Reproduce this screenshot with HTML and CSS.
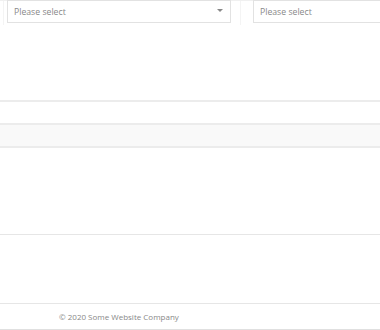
FILE: index.html
```html
<!DOCTYPE html>
<html>
<head>
	<meta charset="utf-8">
	<meta name="viewport" content="width=device-width,initial-scale=1.0">
	<title>Filters</title>
	<link rel="stylesheet" href="styles.css">
</head>
<body>

	<!-- FILTER ROW -->
	<section class="filters">
		<section class="filter-cell first">
			<section class="select">
				<span class="placeholder">Please select</span>
				<figure class="caret"></figure>
			</section>
		</section>
		<section class="filter-cell second">
			<section class="select">
				<span class="placeholder">Please select</span>
			</section>
		</section>
	</section>

	<!-- TABLE AREA -->
	<section class="table">
		<section class="table-head"></section>
		<section class="table-band"></section>
		<section class="table-body"></section>
	</section>

	<section class="spacer"></section>

	<!-- FOOTER -->
	<footer class="footer">
		<span>&copy; 2020 Some Website Company</span>
	</footer>

</body>
</html>
```

FILE: styles.css
```css
body {
	padding:0;
	margin:0;
	font-family:"Open Sans", "Liberation Sans", sans-serif;
	background:#fff;
	color:#777;
	width:380px;
	height:330px;
	overflow:hidden;
}

div, figure, section, footer {
	padding:0; margin:0; box-sizing: border-box;
}

.filters {
	display:flex;
	height:24px;
	border-top:1px solid #f0f0f0;
}

.filter-cell {
	height:24px;
	border-left:1px solid #f4f4f4;
}

.filter-cell.first {
	margin-left:3px;
	padding-left:3px;
	width:238px;
	padding-right:9px;
	border-right:1px solid #f4f4f4;
}

.filter-cell.second {
	margin-left:12px;
	flex:1;
	border-left:none;
}

.select {
	height:23px;
	margin-top:-1px;
	border:1px solid #e2e2e2;
	display:flex;
	align-items:center;
	padding:0 7px 0 6px;
	font-size:8.7px;
	color:#888;
}

.second .select {
	border-right:none;
}

.placeholder {
	flex:1;
}

.caret {
	width:0;
	height:0;
	border-left:3px solid transparent;
	border-right:3px solid transparent;
	border-top:3px solid #888;
	margin-top:-2px;
}

.table {
	margin-top:76px;
}

.table-head {
	height:23px;
	border-top:2px solid #ececec;
}

.table-band {
	height:25px;
	background:#f9f9f9;
	border-top:2px solid #ececec;
	border-bottom:2px solid #ececec;
}

.table-body {
	height:86px;
}

.spacer {
	height:69px;
	border-top:1px solid #e6e6e6;
}

.footer {
	height:27px;
	border-top:1px solid #e6e6e6;
	border-bottom:1px solid #e0e0e0;
	display:flex;
	align-items:center;
	padding-left:59px;
	font-size:8px;
	color:#888;
}
```
